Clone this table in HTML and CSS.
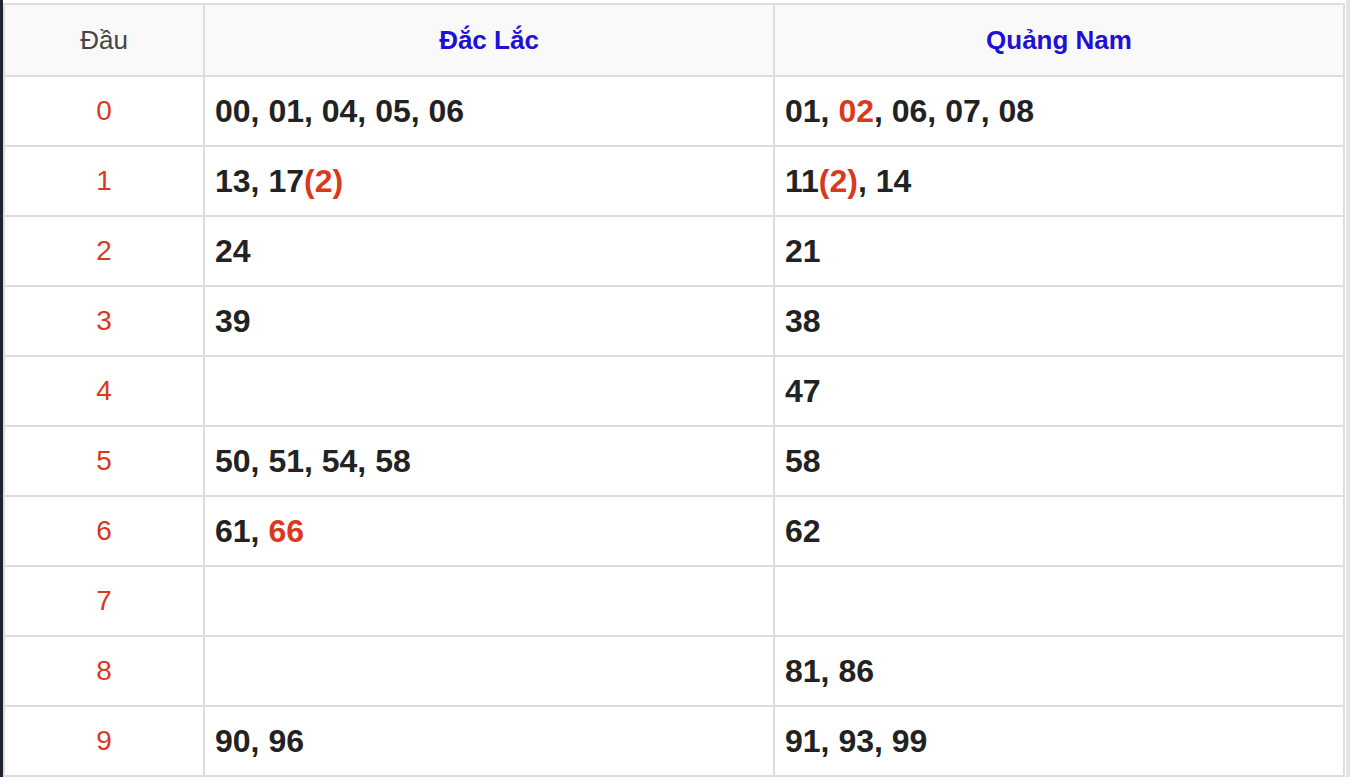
FILE: index.html
```html
<!DOCTYPE html>
<html lang="vi">
<head>
<meta charset="utf-8">
<title>Thống kê đầu</title>
<link rel="stylesheet" href="styles.css">
</head>
<body>
<div class="page">
  <div class="edge-left"></div>
  <main class="content">
    <table class="loto">
      <colgroup>
        <col class="c-head">
        <col class="c-prov">
        <col class="c-prov">
      </colgroup>
      <thead>
        <tr>
          <th class="h-dau">Đầu</th>
          <th class="h-prov">Đắc Lắc</th>
          <th class="h-prov">Quảng Nam</th>
        </tr>
      </thead>
      <tbody>
        <tr><td class="dau">0</td><td class="nums">00, 01, 04, 05, 06</td><td class="nums">01, <span class="hl">02</span>, 06, 07, 08</td></tr>
        <tr><td class="dau">1</td><td class="nums">13, 17<span class="hl">(2)</span></td><td class="nums">11<span class="hl">(2)</span>, 14</td></tr>
        <tr><td class="dau">2</td><td class="nums">24</td><td class="nums">21</td></tr>
        <tr><td class="dau">3</td><td class="nums">39</td><td class="nums">38</td></tr>
        <tr><td class="dau">4</td><td class="nums"></td><td class="nums">47</td></tr>
        <tr><td class="dau">5</td><td class="nums">50, 51, 54, 58</td><td class="nums">58</td></tr>
        <tr><td class="dau">6</td><td class="nums">61, <span class="hl">66</span></td><td class="nums">62</td></tr>
        <tr><td class="dau">7</td><td class="nums"></td><td class="nums"></td></tr>
        <tr><td class="dau">8</td><td class="nums"></td><td class="nums">81, 86</td></tr>
        <tr><td class="dau">9</td><td class="nums">90, 96</td><td class="nums">91, 93, 99</td></tr>
      </tbody>
    </table>
  </main>
  <div class="edge-right"></div>
</div>
</body>
</html>
```
FILE: styles.css
```css
html, body {
  margin: 0;
  padding: 0;
  background: #ffffff;
}

body {
  font-family: "Liberation Sans", Arial, sans-serif;
  color: #222222;
}

.page {
  display: flex;
  width: 1350px;
  height: 777px;
  overflow: hidden;
}

.edge-left {
  width: 3px;
  flex: none;
  background: #1e2530;
}

.content {
  width: 1342px;
  flex: none;
  padding-top: 3px;
}

.edge-right {
  flex: 1;
  border-left: 1px solid #ffffff;
  background: #e4e4e4;
}

.loto {
  width: 1342px;
  table-layout: fixed;
  border-collapse: collapse;
  border: 2px solid #dddddd;
}

.c-head { width: 200px; }
.c-prov { width: 570px; }

.loto th,
.loto td {
  border: 2px solid #dddddd;
  padding: 0 10px;
  vertical-align: middle;
}

.loto th {
  height: 70px;
  background: #f9f9f9;
  font-size: 26px;
  text-align: center;
}

.h-dau {
  font-weight: normal;
  color: #444444;
}

.h-prov {
  font-weight: bold;
  color: #1f10d8;
}

.loto td {
  height: 68px;
}

.dau {
  text-align: center;
  color: #d9391d;
  font-size: 28px;
}

.nums {
  text-align: left;
  font-weight: bold;
  font-size: 32px;
  color: #222222;
}

.hl {
  color: #d9391d;
}
```
